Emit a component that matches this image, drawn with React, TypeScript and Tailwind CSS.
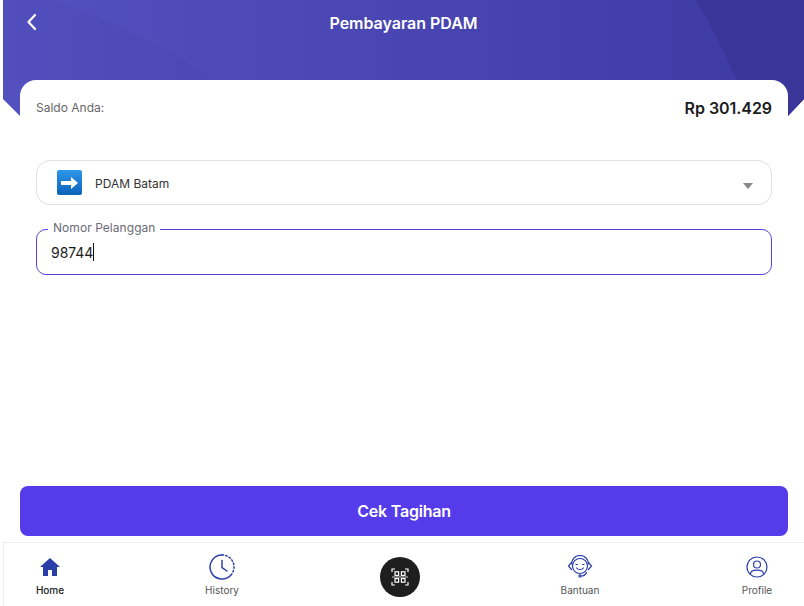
const font = "font-['Inter',_'Noto_Sans',_sans-serif]"

function NavItem({ label, active, className, children }: { label: string; active?: boolean; className?: string; children: React.ReactNode }) {
  return (
    <div className={`flex w-[60px] flex-col items-center ${className ?? ""}`}>
      <div className="flex h-[26px] items-center justify-center">{children}</div>
      <span className={`mt-[4px] text-[10px] leading-[12px] ${active ? "font-medium text-[#222]" : "text-[#555]"}`}>{label}</span>
    </div>
  )
}

export default function App() {
  return (
    <div className={`${font} relative flex h-[606px] w-[804px] flex-col overflow-hidden bg-white pl-[3px]`}>
      {/* header background */}
      <div className="absolute left-[3px] right-0 top-0 h-[116px] overflow-hidden">
        <svg width="801" height="116" viewBox="0 0 801 116" className="block">
          <defs>
            <linearGradient id="hd" x1="0" y1="0" x2="1" y2="0">
              <stop offset="0%" stopColor="#5350c0" />
              <stop offset="100%" stopColor="#3e3aa3" />
            </linearGradient>
            <clipPath id="hdclip">
              <path d="M0 0H801V99L785 116H17L0 99Z" />
            </clipPath>
          </defs>
          <g clipPath="url(#hdclip)">
            <rect width="801" height="116" fill="url(#hd)" />
            <path d="M0 0H48C110 20 170 50 210 80H0Z" fill="#000" fillOpacity="0.015" />
            <path d="M692 0H801V116H748C730 70 712 30 692 0Z" fill="#3a3699" />
          </g>
        </svg>
      </div>

      <div className="relative flex h-[80px] shrink-0 items-start justify-center">
        <button className="absolute left-[20px] top-[12px] text-white">
          <svg width="18" height="20" viewBox="0 0 18 20" fill="none" stroke="currentColor" strokeWidth="2.2" strokeLinecap="round" strokeLinejoin="round">
            <path d="M12 3 5.5 10 12 17" />
          </svg>
        </button>
        <h1 className="mt-[13px] text-[16px] leading-[20px] font-semibold tracking-[-0.03px] text-white">Pembayaran PDAM</h1>
      </div>

      <div className="relative ml-[17px] mr-[16px] flex-1 rounded-t-[16px] bg-white px-[16px]">
        <div className="flex items-center justify-between pt-[18px]">
          <span className="text-[12px] leading-[20px] text-[#666]">Saldo Anda:</span>
          <span className="text-[16px] leading-[20px] font-semibold tracking-[-0.05px] text-[#1c1c1c]">Rp 301.429</span>
        </div>

        <div className="mt-[42px] flex h-[45px] items-center rounded-[14px] border border-[#e0e0e0] pl-[20px] pr-[18px]">
          <span className="flex h-[25px] w-[25px] items-center justify-center rounded-[2px] bg-gradient-to-b from-[#2c97e8] to-[#0d62bb]">
            <svg width="19" height="14" viewBox="0 0 19 14" fill="#fff">
              <path d="M1 5h10V1l7 6-7 6V9H1Z" />
            </svg>
          </span>
          <span className="ml-[13px] pt-[2px] text-[12px] leading-[16px] text-[#333]">PDAM Batam</span>
          <span className="ml-auto mt-[6px] h-0 w-0 border-x-[5px] border-t-[6px] border-x-transparent border-t-[#888]" />
        </div>

        <div className="relative mt-[24px] flex h-[46px] items-center rounded-[10px] border border-[#5a3fe0] px-[14px]">
          <span className="absolute left-[11px] top-[-10px] bg-white px-[5px] text-[12px] leading-[16px] tracking-[0.05px] text-[#6b6b76]">Nomor Pelanggan</span>
          <span className="pt-[2px] text-[14px] leading-[20px] tracking-[-0.05px] text-[#1c1c1c]">98744</span>
          <span className="h-[18px] w-px bg-[#111]" />
        </div>
      </div>

      <div className="ml-[17px] mr-[16px] flex h-[50px] shrink-0 items-center justify-center rounded-[8px] bg-[#553bea] text-[16px] font-semibold tracking-[-0.2px] text-white">
        Cek Tagihan
      </div>

      <div className="mt-[6px] flex h-[64px] shrink-0 items-start border-l border-t border-[#eee] pl-[16px] pt-[11px]">
        <NavItem label="Home" active>
          <svg width="22" height="20" viewBox="0 0 22 20" fill="#2b3fa8">
            <path d="M11 1 1 10h3v9h5v-6h4v6h5v-9h3Z" />
          </svg>
        </NavItem>
        <NavItem label="History" className="ml-[112px]">
          <svg width="26" height="26" viewBox="0 0 26 26" fill="none" stroke="#2b3fa8" strokeWidth="1.5" strokeLinecap="round">
            <path d="M13 1a12 12 0 1 0 8.5 20.5" />
            <path d="M13 1a12 12 0 0 1 8.5 20.5" strokeDasharray="1.5 2.2" />
            <path d="M13 6.5V13.5L18 17" />
          </svg>
        </NavItem>
        <div className="ml-[118px] flex w-[60px] justify-center pt-[3px]">
          <div className="flex h-[40px] w-[40px] items-center justify-center rounded-full bg-[#1e1e1e]">
            <svg width="18" height="18" viewBox="0 0 18 18" fill="none" stroke="#fff" strokeWidth="1.2">
              <path d="M1 4V1h3M14 1h3v3M17 14v3h-3M4 17H1v-3" />
              <path d="M1 9h16" strokeWidth="0.8" />
              <rect x="4" y="3.8" width="3.6" height="3.6" />
              <rect x="10.4" y="3.8" width="3.6" height="3.6" />
              <rect x="4" y="10.6" width="3.6" height="3.6" />
              <rect x="10.4" y="10.6" width="3.6" height="3.6" />
            </svg>
          </div>
        </div>
        <NavItem label="Bantuan" className="ml-[120px]">
          <svg width="26" height="24" viewBox="0 0 26 24" fill="none" stroke="#2b3fa8" strokeWidth="1.2" strokeLinecap="round">
            <circle cx="13" cy="11" r="7.5" />
            <path d="M4.5 9a8.5 8.5 0 0 1 17 0" />
            <path d="M4.5 7.5 1.5 11l3 3.5M21.5 7.5 24.5 11l-3 3.5" />
            <path d="M9 9.5h1.5M15.5 9.5H17M9.5 13c1.5 2 5.5 2 7 0" />
            <path d="M19.5 17.5c-1 2.5-3 3.5-5.5 3.5" />
            <circle cx="13" cy="21" r="1.1" />
          </svg>
        </NavItem>
        <NavItem label="Profile" className="ml-[117px]">
          <svg width="22" height="22" viewBox="0 0 22 22" fill="none" stroke="#2b3fa8" strokeWidth="1.2">
            <circle cx="11" cy="11" r="10" />
            <circle cx="11" cy="8.5" r="3.5" />
            <path d="M4.5 18c0-3 2.5-3.8 6.5-3.8s6.5.8 6.5 3.8" />
          </svg>
        </NavItem>
      </div>
    </div>
  )
}
